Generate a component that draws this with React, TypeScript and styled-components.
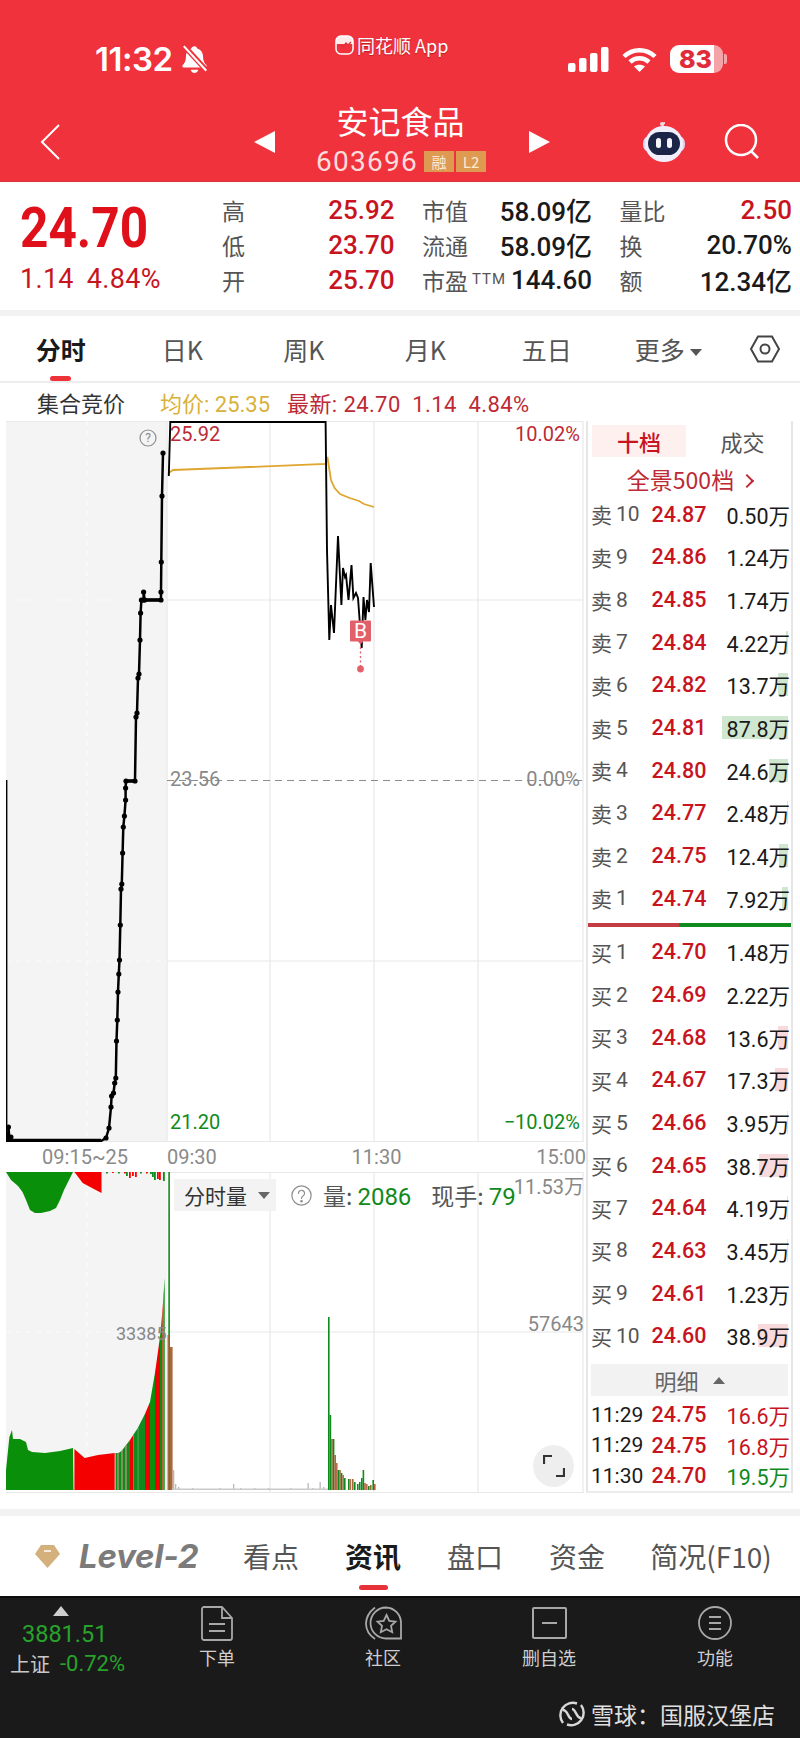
import React from "react";
import styled, { createGlobalStyle } from "styled-components";

const RED = "#c8141e";
const SOFT_RED = "#bd2a35";
const GREEN = "#0f8a1c";
const NUM = `Roboto, "Noto Sans CJK SC", sans-serif`;
const CJK = `"Noto Sans CJK SC", Roboto, sans-serif`;

const Global = createGlobalStyle`
  html, body { margin: 0; padding: 0; background: #fff; }
  * { box-sizing: border-box; }
`;

const Page = styled.div`
  width: 800px;
  height: 1738px;
  display: flex;
  flex-direction: column;
  overflow: hidden;
  font-family: ${CJK};
  color: #1a1a1a;
`;

/* header */
const Header = styled.header`
  height: 182px;
  background: #f0323c;
  color: #fff;
  border-bottom: 1px solid #d8343c;
`;
const StatusBar = styled.div`
  height: 103px;
  display: grid;
  grid-template-columns: 335px 1fr auto;
`;
const StatusLeft = styled.div`
  padding: 37px 0 0 95px;
  height: 81px;
  display: flex;
  align-items: center;
  gap: 7px;
`;
const Clock = styled.span`
  font: 600 33px Inter, sans-serif;
  letter-spacing: -0.5px;
`;
const AppTag = styled.div`
  display: flex;
  align-items: center;
  gap: 3px;
  height: 20px;
  margin-top: 35px;
  font: 400 18px ${CJK};
  color: #fff;
  text-shadow: 0 1px 1px rgba(120, 0, 0, 0.45);
`;
const StatusRight = styled.div`
  padding: 37px 77px 0 0;
  height: 81px;
  display: flex;
  align-items: center;
  gap: 13px;
`;
const Battery = styled.div`
  position: relative;
  width: 53px;
  height: 28px;
  border-radius: 9px;
  background: linear-gradient(90deg, #fff 0 44px, #f4a3a8 44px);
  color: #e02c38;
  font: 800 25px/28px Inter, sans-serif;
  padding-left: 9px;
  &::after {
    content: "";
    position: absolute;
    right: -4px;
    top: 9px;
    width: 3px;
    height: 10px;
    border-radius: 0 2px 2px 0;
    background: #f4a3a8;
  }
`;
const NavRow = styled.div`
  height: 78px;
  display: flex;
  align-items: center;
`;
const BackCell = styled.div`
  width: 254px;
  padding-left: 40px;
  display: flex;
`;
const Arrow = styled.div<{ $dir: "left" | "right" }>`
  width: 0;
  height: 0;
  border-top: 11px solid transparent;
  border-bottom: 11px solid transparent;
  ${(p) =>
    p.$dir === "left"
      ? "border-right: 21px solid #fff;"
      : "border-left: 21px solid #fff;"}
`;
const TitleBlock = styled.div`
  width: 254px;
  display: flex;
  flex-direction: column;
  align-items: center;
`;
const Title = styled.div`
  font: 400 32px/40px ${CJK};
  margin: -5px 3px 3px 0;
`;
const CodeLine = styled.div`
  display: flex;
  align-items: center;
  height: 36px;
  margin-right: 2px;
  font: 400 28px ${NUM};
  letter-spacing: 1.3px;
  color: #fbdcdc;
`;
const Badge = styled.span`
  width: 30px;
  height: 21px;
  margin-left: 2px;
  background: #df9a52;
  color: #fbe9d3;
  font: 400 15px/21px ${CJK};
  letter-spacing: 0;
  text-align: center;
  &:first-of-type {
    margin-left: 6px;
  }
`;
const NavTools = styled.div`
  margin-left: 92px;
  display: flex;
  align-items: center;
  gap: 38px;
`;

/* quote */
const Quote = styled.section`
  height: 128px;
  display: grid;
  grid-template-columns: 222px 1fr;
  background: #fff;
`;
const PriceBlock = styled.div`
  padding: 16px 0 0 20px;
`;
const LastPrice = styled.div`
  font: 700 56px/60px ${NUM};
  color: #e0101a;
  transform: scaleX(0.885);
  transform-origin: left;
`;
const Change = styled.div`
  display: flex;
  gap: 13px;
  margin-top: 6px;
  font: 400 27px/30px ${NUM};
  letter-spacing: 0.3px;
  color: ${RED};
`;
const StatGrid = styled.div`
  padding-top: 10px;
  display: grid;
  grid-template-columns: 172.5px 170px 172.5px;
  column-gap: 27.5px;
  grid-auto-rows: 35px;
`;
const Stat = styled.div`
  display: flex;
  justify-content: space-between;
  align-items: center;
  white-space: nowrap;
`;
const StatLabel = styled.span`
  font: 400 23px ${CJK};
  color: #555;
  sup {
    font: 400 15px ${NUM};
    vertical-align: 6px;
    margin-left: 4px;
    letter-spacing: 1px;
  }
`;
const StatValue = styled.span<{ $red?: boolean }>`
  font: 500 26px ${NUM};
  color: ${(p) => (p.$red ? RED : "#1a1a1a")};
`;
const GrayStrip = styled.div<{ $h?: number }>`
  height: ${(p) => p.$h || 6}px;
  background: #f2f2f2;
  flex: none;
`;

/* period tabs */
const PeriodTabs = styled.nav`
  height: 67px;
  display: grid;
  grid-template-columns: repeat(6, 121.5px) 1fr;
  align-items: center;
  border-bottom: 2px solid #ececec;
  flex: none;
`;
const PeriodTab = styled.div<{ $active?: boolean }>`
  position: relative;
  text-align: center;
  font: ${(p) => (p.$active ? 700 : 400)} 25px/34px ${CJK};
  color: ${(p) => (p.$active ? "#1a1a1a" : "#555")};
  ${(p) =>
    p.$active &&
    `&::after {
      content: "";
      position: absolute;
      left: 50px;
      top: 44px;
      width: 21px;
      height: 5px;
      border-radius: 3px;
      background: #ee3239;
    }`}
`;
const Caret = styled.span`
  display: inline-block;
  margin-left: 5px;
  vertical-align: 4px;
  border-left: 6px solid transparent;
  border-right: 6px solid transparent;
  border-top: 7px solid #555;
`;
const HexCell = styled.div`
  display: flex;
  justify-content: center;
`;
const InfoRow = styled.div`
  height: 38px;
  display: flex;
  align-items: center;
  padding-left: 37px;
  font: 400 22px ${CJK};
  flex: none;
`;
const InfoName = styled.span`
  width: 123px;
  color: #333;
`;
const InfoGold = styled.span`
  width: 127px;
  color: #d8b13a;
  font-family: ${NUM};
  white-space: nowrap;
`;
const InfoRed = styled.span`
  color: ${SOFT_RED};
  font-family: ${NUM};
  letter-spacing: 0.4px;
  white-space: pre;
`;

/* chart + order book */
const Board = styled.section`
  height: 1072px;
  padding-left: 6px;
  display: grid;
  grid-template-columns: 580px 207px;
  flex: none;
`;
const ChartColumn = styled.div`
  display: flex;
  flex-direction: column;
`;
const PriceChart = styled.div`
  position: relative;
  height: 721px;
`;
const ChartSvg = styled.svg`
  display: block;
`;
const ChartLabel = styled.span<{ $color?: string; $x?: number; $right?: number; $y: number }>`
  position: absolute;
  top: ${(p) => p.$y}px;
  ${(p) => (p.$x !== undefined ? `left: ${p.$x}px;` : `right: ${p.$right}px;`)}
  font: 400 20px/24px ${NUM};
  color: ${(p) => p.$color || "#888"};
  white-space: nowrap;
`;
const HelpMark = styled(ChartLabel)`
  font-size: 12px;
  line-height: 20px;
  width: 8px;
  text-align: center;
`;
const BuyMark = styled(ChartLabel)`
  font-size: 21px;
  width: 20px;
  text-align: center;
`;
const PreVolLabel = styled(ChartLabel)`
  font-size: 18px;
`;
const AxisRow = styled.div`
  position: relative;
  height: 30px;
  font: 400 20px/30px ${NUM};
  color: #8a8a8a;
  display: grid;
  grid-template-columns: 161px 1fr 1fr 1fr;
`;
const AxisPre = styled.span`
  text-align: right;
  padding-right: 39px;
  white-space: nowrap;
`;
const AxisCell = styled.span<{ $align: string }>`
  text-align: ${(p) => p.$align};
`;
const VolumeChart = styled.div`
  position: relative;
  height: 321px;
`;
const VolumeBar = styled.div`
  position: absolute;
  left: 168px;
  top: 7px;
  display: flex;
  align-items: center;
  height: 32px;
  font: 400 23px ${CJK};
  color: #555;
`;
const VolumeSelect = styled.div`
  width: 102px;
  height: 32px;
  background: #f3f3f3;
  color: #333;
  display: flex;
  align-items: center;
  padding-left: 10px;
  gap: 11px;
  font-size: 21px;
`;
const VolCaret = styled(Caret)`
  margin: 0;
  vertical-align: 0;
  border-top-color: #666;
`;
const VolumeHelp = styled.span`
  display: flex;
  margin: 0 11px 0 15px;
`;
const VolumeNum = styled.span`
  color: ${GREEN};
  font-family: ${NUM};
  font-size: 24px;
  margin-left: 5px;
`;
const VolumeGroup = styled.span`
  white-space: nowrap;
  & + & {
    margin-left: 20px;
  }
`;
const ExpandButton = styled.div`
  position: absolute;
  left: 527px;
  top: 273px;
  width: 41px;
  height: 42px;
  border-radius: 50%;
  background: #eeeeee;
  display: flex;
  align-items: center;
  justify-content: center;
`;

const OrderBook = styled.aside`
  border-left: 2px solid #e6e6e6;
  border-right: 2px solid #e6e6e6;
  border-bottom: 2px solid #ececec;
  display: flex;
  flex-direction: column;
  padding-top: 4px;
  width: 207px;
  overflow: hidden;
`;
const BookTabs = styled.div`
  display: grid;
  grid-template-columns: 94px 1fr;
  margin: 0 4px;
  height: 32px;
`;
const BookTab = styled.div<{ $active?: boolean }>`
  text-align: center;
  font: ${(p) => (p.$active ? 500 : 400)} 22px/32px ${CJK};
  color: ${(p) => (p.$active ? RED : "#555")};
  background: ${(p) => (p.$active ? "#fdf0ef" : "transparent")};
  padding-left: ${(p) => (p.$active ? 0 : 12)}px;
`;
const FullDepth = styled.div`
  height: 36px;
  text-align: center;
  font: 400 23px/44px ${CJK};
  color: ${SOFT_RED};
`;
const Chevron = styled.span`
  display: inline-block;
  width: 10px;
  height: 10px;
  margin-left: 8px;
  vertical-align: 3px;
  border-top: 2px solid ${SOFT_RED};
  border-right: 2px solid ${SOFT_RED};
  transform: rotate(45deg);
`;
const BookRow = styled.div<{ $h: number }>`
  position: relative;
  height: ${(p) => p.$h}px;
  flex: none;
  display: grid;
  grid-template-columns: 60.5px 58px 1fr;
  align-items: center;
  padding: 0 1px 0 3px;
  white-space: nowrap;
`;
const Level = styled.span`
  font: 400 21px ${NUM};
  color: #555;
  display: flex;
  align-items: center;
  gap: 4px;
`;
const LevelSide = styled.span`
  font-family: ${CJK};
`;
const BookPrice = styled.span`
  font: 500 21.5px ${NUM};
  color: ${RED};
`;
const BookVol = styled.span<{ $color?: string }>`
  position: relative;
  text-align: right;
  font: 400 21.5px ${NUM};
  color: ${(p) => p.$color || "#1a1a1a"};
`;
const VolShade = styled.span<{ $buy?: boolean }>`
  position: absolute;
  right: 2px;
  top: 50%;
  height: 23px;
  margin-top: -11.5px;
  background: ${(p) => (p.$buy ? "#f8d9dc" : "#cfe6cf")};
`;
const BookVolText = styled.span`
  position: relative;
`;
const SplitBar = styled.div`
  height: 4px;
  flex: none;
  margin: 3px 0 4px;
  background: linear-gradient(90deg, #c23c44 0 91px, #108a1e 91px);
`;
const DetailBar = styled.div`
  height: 32px;
  flex: none;
  margin: 7px 3px 3px;
  width: 197px;
  background: #f2f2f2;
  display: flex;
  align-items: center;
  justify-content: center;
  gap: 14px;
  font: 400 22px ${CJK};
  color: #666;
`;
const UpCaret = styled.span`
  border-left: 6px solid transparent;
  border-right: 6px solid transparent;
  border-bottom: 7px solid #666;
`;
const TickTime = styled.span`
  font: 400 21px ${NUM};
  color: #1a1a1a;
`;

/* section tabs */
const Spacer = styled.div`
  height: 16px;
  flex: none;
`;
const SectionTabs = styled.nav`
  height: 80px;
  padding-left: 35px;
  display: flex;
  align-items: center;
  flex: none;
`;
const LevelBrand = styled.div`
  width: 185px;
  display: flex;
  align-items: center;
  gap: 19px;
  font: italic 700 33px Inter, sans-serif;
  letter-spacing: -0.2px;
  color: #7b7b7b;
  white-space: nowrap;
`;
const SectionTab = styled.div<{ $active?: boolean; $w?: number }>`
  position: relative;
  width: ${(p) => p.$w || 102}px;
  text-align: center;
  white-space: nowrap;
  font: ${(p) => (p.$active ? 700 : 400)} 28px/36px ${CJK};
  color: ${(p) => (p.$active ? "#1a1a1a" : "#555")};
  ${(p) =>
    p.$active &&
    `&::after {
      content: "";
      position: absolute;
      left: 37px;
      top: 47px;
      width: 29px;
      height: 5px;
      border-radius: 3px;
      background: #e8323a;
    }`}
`;

/* bottom */
const Footer = styled.footer`
  flex: 1;
  background: #1a1a1a;
  border-top: 2px solid #0c0c0c;
  color: #cfcfcf;
`;
const FooterNav = styled.div`
  height: 84px;
  display: grid;
  grid-template-columns: 134px repeat(4, 166px);
  padding-top: 6px;
`;
const IndexCell = styled.div`
  display: flex;
  flex-direction: column;
  align-items: flex-start;
  padding-left: 10px;
`;
const IndexCaret = styled.span`
  margin: 2px 0 0 43px;
  border-left: 8px solid transparent;
  border-right: 8px solid transparent;
  border-bottom: 10px solid #cfcfcf;
`;
const IndexValue = styled.div`
  margin: 3px 0 0 12px;
  font: 400 23.5px/30px ${NUM};
  color: #27a32b;
`;
const IndexLine = styled.div`
  display: flex;
  align-items: center;
  gap: 10px;
  margin-top: 1px;
  height: 26px;
  font: 400 20px ${CJK};
  color: #c8c8c8;
`;
const IndexPct = styled.span`
  font: 400 22px ${NUM};
  color: #27a32b;
`;
const FooterItem = styled.div`
  display: flex;
  flex-direction: column;
  align-items: center;
`;
const FooterIcon = styled.div`
  height: 38px;
  display: flex;
  align-items: center;
  justify-content: center;
`;
const FooterLabel = styled.span`
  font: 400 18px/26px ${CJK};
  margin-top: 2px;
  color: #cfcfcf;
`;
const Watermark = styled.div`
  margin-top: 16px;
  padding-right: 25px;
  height: 32px;
  display: flex;
  align-items: center;
  justify-content: flex-end;
  gap: 5px;
  font: 400 23px ${CJK};
  color: #e0e0e0;
`;

/* chart data, in page coordinates */
const pts = (a: number[][]) => a.map((p) => p.join(",")).join(" ");

const rise = [
  [106, 1138], [109, 1128], [111, 1107], [111.6, 1096], [113.5, 1093], [114.7, 1083], [115.8, 1078],
  [116.5, 1041], [117.3, 1020], [118, 992], [118.8, 974], [119.5, 960], [120.3, 925], [121, 889],
  [121.8, 884], [122.6, 853], [123.3, 827], [124.4, 816], [125.6, 800], [125.6, 788], [126, 781],
  [135, 781], [136, 717], [137, 713], [138, 678], [139, 674], [140, 640], [140.6, 613], [141.4, 600],
  [143.6, 600], [143.6, 592], [144.6, 600], [161, 600], [161, 592], [161.3, 562], [162, 496], [163, 453],
];
const auctionLine = [[8, 1141], [8.5, 1127], [9.5, 1141], [11, 1137], [12, 1141], [101, 1141], ...rise];
const dayLine = [
  [168.8, 476], [170.3, 422], [325.6, 422], [327, 550], [329.3, 640], [331, 605], [334, 633], [338, 536],
  [341.4, 605], [343, 568], [345, 577], [346, 575], [348.5, 600], [351.5, 565], [353.4, 598], [356, 593],
  [358, 598], [360, 625], [361.7, 648], [363.5, 597], [365.4, 620], [367, 600], [369, 612], [370.7, 563], [374, 607],
];
const avgLine = [
  [168.8, 473], [173, 470], [325.6, 464], [327.4, 457], [331, 480], [334.6, 488], [340, 494], [349.6, 498],
  [359, 501], [364, 504], [374, 507],
];

const preBars = [
  [106, 1.5, GREEN], [112, 1, "#f00"], [118, 1.5, GREEN], [124, 1.5, "#f00"], [126, 4, GREEN], [129, 6, "#f00"],
  [132, 4, "#f00"], [135, 5, "#f00"], [140, 1.5, GREEN], [146, 1.5, "#f00"], [150, 2, GREEN], [152, 5, GREEN],
  [154, 8, GREEN], [157, 7, "#f00"], [159, 8, "#f00"], [163, 9, GREEN],
] as [number, number, string][];
const riseTop = (x: number) => {
  const e = [[115, 1453], [120, 1453], [130, 1440], [141, 1423], [150, 1402], [156, 1367], [160, 1337], [162.5, 1310], [165, 1273]];
  for (let i = 1; i < e.length; i++) {
    if (x <= e[i][0]) {
      const t = (x - e[i - 1][0]) / (e[i][0] - e[i - 1][0]);
      return e[i - 1][1] + t * (e[i][1] - e[i - 1][1]);
    }
  }
  return 1273;
};
const riseStripes = [
  [115.5, 2, GREEN], [117.5, 1, "#d84030"], [118.5, 3, GREEN], [121.5, 1, "#d84030"], [122.5, 3, GREEN],
  [125.5, 1, "#d84030"], [126.5, 3.5, GREEN], [130, 3.5, "#f00000"], [133.5, 3.5, GREEN], [137, 1.2, "#d84030"],
  [138.2, 6.8, GREEN], [145, 5, "#f00000"], [150, 5, "#0a8f0a"], [155, 5, "#f00000"], [160, 2.5, "#0a8f0a"],
  [162.5, 1, "#f00000"], [163.5, 1.2, "#0a8f0a"],
] as [number, number, string][];
const dayBars = [
  [328, 1.6, 1317, GREEN], [329.6, 1.6, 1415, GREEN], [331.2, 1.6, 1439, "#a9683c"], [332.8, 1.6, 1439, GREEN],
  [334.4, 1.6, 1455, "#a9683c"], [336, 1.6, 1463, "#c06a50"], [337.6, 1.6, 1470, GREEN], [339.2, 1.6, 1470, "#a9683c"],
  [340.8, 1.6, 1473, GREEN], [342.4, 1.6, 1475, "#c06a50"], [344, 1.6, 1478, GREEN], [348, 1.6, 1479, GREEN],
  [349.6, 1.6, 1479, "#c06a50"], [352, 1.6, 1479, "#a9683c"], [354, 1.6, 1482, GREEN], [357, 1.6, 1484, GREEN],
  [359, 1.6, 1482, GREEN], [361, 1.6, 1478, GREEN], [362.6, 1.6, 1470, GREEN], [364.2, 1.6, 1483, "#a9683c"],
  [366, 1.6, 1484, "#c06a50"], [368, 1.6, 1486, GREEN], [370, 1.6, 1485, "#a9683c"], [372.4, 1.6, 1480, GREEN],
  [374, 1.6, 1484, "#a9683c"],
] as [number, number, number, string][];
const tinyBars = [
  [173, 1470], [175, 1484], [178, 1487], [192, 1488], [219, 1488], [233, 1484], [240, 1488], [254, 1488],
  [268, 1488], [290, 1488], [307.5, 1483], [312, 1488], [319.5, 1482], [323, 1487],
];

const PriceDrawing = () => (
  <ChartSvg width={580} height={721} viewBox="6 421 580 721">
    <rect x={6} y={421} width={161} height={721} fill="#f4f4f4" />
    <g stroke="#e8e8e8" strokeWidth={1.2} fill="none">
      <path d="M6 421.5H583M583 421V1142M6 1141.5H583M167 600H583M167 961H583M167 421V1142M270 421V1142M374 421V1142M478 421V1142" />
    </g>
    <path d="M6 600H167M6 961H167M87 421V1142" stroke="#fafafa" strokeWidth={1.2} strokeDasharray="5 5" />
    <path d="M167 780.5H583" stroke="#8c8c8c" strokeWidth={1.2} strokeDasharray="7 5" />
    <path d="M6.7 780V1142" stroke="#000" strokeWidth={1.4} />
    <polyline points={pts(auctionLine)} fill="none" stroke="#000" strokeWidth={2.5} strokeLinejoin="round" />
    <path d="M7 1141H101" stroke="#000" strokeWidth={4.5} />
    <path d="M126 781H135M141 600H161" stroke="#000" strokeWidth={3.5} />
    {rise.map((p, i) => (
      <circle key={i} cx={p[0]} cy={p[1]} r={2.6} fill="#000" />
    ))}
    <circle cx={8.5} cy={1127} r={2.5} fill="#000" />
    <circle cx={11} cy={1137} r={2.5} fill="#000" />
    <polyline points={pts(avgLine)} fill="none" stroke="#e0a52e" strokeWidth={1.8} />
    <polyline points={pts(dayLine)} fill="none" stroke="#000" strokeWidth={1.9} strokeLinejoin="miter" />
    <path d="M360.5 647V666" stroke="#e2606a" strokeWidth={1.4} strokeDasharray="2 2.5" />
    <circle cx={360.5} cy={669} r={3.4} fill="#e2606a" />
    <path d="M351 620.5h19a1 1 0 0 1 1 1v19a1 1 0 0 1-1 1h-7l-2.5 3-2.5-3h-7a1 1 0 0 1-1-1v-19a1 1 0 0 1 1-1z" fill="#e2606a" />
    <circle cx={148} cy={438} r={8} fill="none" stroke="#8e8e8e" strokeWidth={1.2} />
  </ChartSvg>
);

const VolumeDrawing = () => (
  <ChartSvg width={580} height={321} viewBox="6 1172 580 321">
    <rect x={6} y={1172} width={161} height={318} fill="#f4f4f4" />
    <path
      d="M6 1172.5H583M583 1172V1493M6 1492.5H583M167 1332H583M270 1172V1492M374 1172V1492M478 1172V1492"
      stroke="#e8e8e8"
      strokeWidth={1.2}
      fill="none"
    />
    <path d="M6 1332H167M87 1172V1490" stroke="#fafafa" strokeWidth={1.2} strokeDasharray="5 5" />
    <polygon
      points="6,1172 11,1180 18,1186 22.5,1192 26,1200 30,1210 35,1213 41,1213 50,1211 56,1208 60,1200 64,1190 69,1180 73,1172"
      fill="#0a8f0a"
    />
    <polygon points="74.4,1172 82.7,1183 92,1188 101.5,1193 101.5,1172" fill="#f40000" />
    {preBars.map(([x, h, c], i) => (
      <rect key={i} x={x} y={1172} width={1.8} height={h} fill={c} />
    ))}
    <polygon
      points="6,1490 6,1470 9.4,1437 12,1430 13,1439 20,1439 26,1442 28,1450 32,1452 45,1453 60,1451 73,1448 73.5,1490"
      fill="#0a8f0a"
    />
    <polygon points="74.4,1449 84.6,1458 98,1455 114.7,1453 114.7,1490 74.4,1490" fill="#f40000" />
    {riseStripes.map(([x, w, c], i) => (
      <polygon key={i} points={pts([[x, 1490], [x, riseTop(x)], [x + w, riseTop(x + w)], [x + w, 1490]])} fill={c} />
    ))}
    <rect x={168.3} y={1172} width={1.6} height={318} fill={GREEN} />
    <rect x={167.5} y={1335} width={1.4} height={155} fill="#a9683c" />
    <rect x={170} y={1347} width={2.6} height={143} fill="#a9683c" />
    {tinyBars.map(([x, y], i) => (
      <rect key={i} x={x} y={y} width={1.3} height={1490 - y} fill="#b9b9b9" />
    ))}
    <rect x={172} y={1488.5} width={156} height={1.5} fill="#c9c9c9" />
    {dayBars.map(([x, w, y, c], i) => (
      <rect key={i} x={x} y={y} width={w} height={1490 - y} fill={c} />
    ))}
  </ChartSvg>
);

const asks = [
  ["10", "24.87", "0.50万", 0], ["9", "24.86", "1.24万", 0], ["8", "24.85", "1.74万", 0], ["7", "24.84", "4.22万", 2],
  ["6", "24.82", "13.7万", 10], ["5", "24.81", "87.8万", 66], ["4", "24.80", "24.6万", 19], ["3", "24.77", "2.48万", 1],
  ["2", "24.75", "12.4万", 9], ["1", "24.74", "7.92万", 6],
] as [string, string, string, number][];
const bids = [
  ["1", "24.70", "1.48万", 0], ["2", "24.69", "2.22万", 0], ["3", "24.68", "13.6万", 10], ["4", "24.67", "17.3万", 13],
  ["5", "24.66", "3.95万", 1], ["6", "24.65", "38.7万", 29], ["7", "24.64", "4.19万", 1], ["8", "24.63", "3.45万", 1],
  ["9", "24.61", "1.23万", 0], ["10", "24.60", "38.9万", 30],
] as [string, string, string, number][];
const ticks = [
  ["11:29", "24.75", "16.6万", RED],
  ["11:29", "24.75", "16.8万", RED],
  ["11:30", "24.70", "19.5万", GREEN],
];

const stats = [
  ["高", "25.92", true], ["市值", "58.09亿", false], ["量比", "2.50", true],
  ["低", "23.70", true], ["流通", "58.09亿", false], ["换", "20.70%", false],
  ["开", "25.70", true], ["市盈", "144.60", false], ["额", "12.34亿", false],
] as [string, string, boolean][];

const BookSide = ({ side, rows }: { side: string; rows: [string, string, string, number][] }) => (
  <>
    {rows.map(([n, price, vol, shade]) => (
      <BookRow key={n} $h={42.67}>
        <Level>
          <LevelSide>{side}</LevelSide>
          {n}
        </Level>
        <BookPrice>{price}</BookPrice>
        <BookVol>
          {shade > 0 && <VolShade $buy={side === "买"} style={{ width: shade }} />}
          <BookVolText>{vol}</BookVolText>
        </BookVol>
      </BookRow>
    ))}
  </>
);

const HelpIcon = ({ size, color }: { size: number; color: string }) => (
  <svg width={size} height={size} viewBox="0 0 24 24" fill="none" stroke={color} strokeWidth={1.4}>
    <circle cx="12" cy="12" r="11" />
    <path d="M8.5 9.5a3.5 3.5 0 1 1 5.5 2.9c-1.3.9-2 1.5-2 3" strokeLinecap="round" />
    <circle cx="12" cy="18.5" r="0.8" fill={color} />
  </svg>
);

export default function App() {
  return (
    <Page>
      <Global />
      <Header>
        <StatusBar>
          <StatusLeft>
            <Clock>11:32</Clock>
            <svg width="29" height="30" viewBox="0 0 27 28">
              <path d="M13.5 2c1.5 0 2.3 1 2.5 2.2 3.5 1 5.5 4 5.500 8 0 4 1.500 6 3 7.500.8.900.3 2.300-1 2.300H3.500c-1.300 0-1.800-1.400-1-2.300 1.500-1.500 3-3.500 3-7.500 0-4 2-7 5-8C10.800 3 12 2 13.500 2z" fill="#fff" />
              <path d="M10 24h7c-.5 2-2 3-3.5 3S10.500 26 10 24z" fill="#fff" />
              <path d="M3 1l22 24" stroke="#f0323c" strokeWidth="5" />
              <path d="M3.5 2l21 23" stroke="#fff" strokeWidth="2" />
            </svg>
          </StatusLeft>
          <AppTag>
            <svg width="19" height="20" viewBox="0 0 19 20">
              <rect x="1" y="1" width="17" height="18" rx="5" fill="none" stroke="#fff" strokeWidth="1.5" />
              <path d="M1 9V6a5 5 0 0 1 5-5h7a5 5 0 0 1 5 5v3z" fill="#fff" opacity="0.9" />
              <path d="M3 11l3-1 2 2 3-4 2 2 3-3" fill="none" stroke="#e0303a" strokeWidth="1.3" />
            </svg>
            同花顺 App
          </AppTag>
          <StatusRight>
            <svg width="41" height="25" viewBox="0 0 41 25" fill="#fff">
              <rect x="0" y="16" width="7.5" height="9" rx="2" />
              <rect x="11" y="11" width="7.5" height="14" rx="2" />
              <rect x="22" y="6" width="7.5" height="19" rx="2" />
              <rect x="33" y="0" width="7.5" height="25" rx="2" />
            </svg>
            <svg width="35" height="25" viewBox="0 0 35 25" fill="none" stroke="#fff" strokeWidth="4.5">
              <path d="M2 9.5C10.5 1 24.5 1 33 9.5" />
              <path d="M8 15c5.5-5 13.5-5 19 0" />
              <path d="M17.5 25l-5.5-5.500c3-2.500 8-2.500 11 0z" fill="#fff" stroke="none" />
            </svg>
            <Battery>83</Battery>
          </StatusRight>
        </StatusBar>
        <NavRow>
          <BackCell>
            <svg width="20" height="36" viewBox="0 0 20 36" fill="none" stroke="#fff" strokeWidth="2">
              <path d="M19 1L2 18l17 17" />
            </svg>
          </BackCell>
          <Arrow $dir="left" />
          <TitleBlock>
            <Title>安记食品</Title>
            <CodeLine>
              603696
              <Badge>融</Badge>
              <Badge>L2</Badge>
            </CodeLine>
          </TitleBlock>
          <Arrow $dir="right" />
          <NavTools>
            <svg width="44" height="42" viewBox="0 0 44 42">
              <path d="M21 7c-1-3 0-5 2-5" fill="none" stroke="#f6d9dc" strokeWidth="2" />
              <circle cx="20" cy="3" r="2" fill="#f6d9dc" />
              <ellipse cx="5" cy="23" rx="4" ry="7" fill="#dcd6f5" />
              <ellipse cx="39" cy="23" rx="4" ry="7" fill="#dcd6f5" />
              <ellipse cx="22" cy="23" rx="19" ry="18" fill="#f1effb" />
              <rect x="6" y="11" width="32" height="23" rx="11.5" fill="#1c2547" />
              <rect x="14" y="17" width="5" height="10" rx="2.5" fill="#f4f4f8" />
              <rect x="25" y="17" width="5" height="10" rx="2.5" fill="#f4f4f8" />
            </svg>
            <svg width="36" height="36" viewBox="0 0 36 36" fill="none" stroke="#fff" strokeWidth="2.5">
              <circle cx="17" cy="16" r="15" />
              <path d="M27 27l7 7" />
            </svg>
          </NavTools>
        </NavRow>
      </Header>

      <Quote>
        <PriceBlock>
          <LastPrice>24.70</LastPrice>
          <Change>
            <span>1.14</span>
            <span>4.84%</span>
          </Change>
        </PriceBlock>
        <StatGrid>
          {stats.map(([label, value, red]) => (
            <Stat key={label}>
              <StatLabel>
                {label}
                {label === "市盈" && <sup>TTM</sup>}
              </StatLabel>
              <StatValue $red={red}>{value}</StatValue>
            </Stat>
          ))}
        </StatGrid>
      </Quote>
      <GrayStrip />

      <PeriodTabs>
        <PeriodTab $active>分时</PeriodTab>
        <PeriodTab>日K</PeriodTab>
        <PeriodTab>周K</PeriodTab>
        <PeriodTab>月K</PeriodTab>
        <PeriodTab>五日</PeriodTab>
        <PeriodTab>
          更多
          <Caret />
        </PeriodTab>
        <HexCell>
          <svg width="30" height="28" viewBox="0 0 30 28" fill="none" stroke="#444" strokeWidth="2">
            <path d="M8 1.5h14L29 14l-7 12.5H8L1 14z" />
            <circle cx="15" cy="14" r="4.5" />
          </svg>
        </HexCell>
      </PeriodTabs>
      <InfoRow>
        <InfoName>集合竞价</InfoName>
        <InfoGold>均价: 25.35</InfoGold>
        <InfoRed>最新: 24.70  1.14  4.84%</InfoRed>
      </InfoRow>

      <Board>
        <ChartColumn>
          <PriceChart>
            <PriceDrawing />
            <ChartLabel $x={164} $y={1} $color={SOFT_RED}>25.92</ChartLabel>
            <ChartLabel $right={6} $y={1} $color={SOFT_RED}>10.02%</ChartLabel>
            <ChartLabel $x={164} $y={346}>23.56</ChartLabel>
            <ChartLabel $right={6} $y={346}>0.00%</ChartLabel>
            <ChartLabel $x={164} $y={689} $color={GREEN}>21.20</ChartLabel>
            <ChartLabel $right={6} $y={689} $color={GREEN}>−10.02%</ChartLabel>
            <HelpMark $x={138} $y={7}>?</HelpMark>
            <BuyMark $x={344.5} $y={198} $color="#fff">B</BuyMark>
          </PriceChart>
          <AxisRow>
            <AxisPre>09:15~25</AxisPre>
            <AxisCell $align="left">09:30</AxisCell>
            <AxisCell $align="center">11:30</AxisCell>
            <AxisCell $align="right">15:00</AxisCell>
          </AxisRow>
          <VolumeChart>
            <VolumeDrawing />
            <VolumeBar>
              <VolumeSelect>
                分时量
                <VolCaret />
              </VolumeSelect>
              <VolumeHelp>
                <HelpIcon size={21} color="#8e8e8e" />
              </VolumeHelp>
              <VolumeGroup>
                量:<VolumeNum>2086</VolumeNum>
              </VolumeGroup>
              <VolumeGroup>
                现手:<VolumeNum>79</VolumeNum>
              </VolumeGroup>
            </VolumeBar>
            <ChartLabel $right={2} $y={3}>11.53万</ChartLabel>
            <ChartLabel $right={2} $y={140}>57643</ChartLabel>
            <PreVolLabel $x={110} $y={150}>33385</PreVolLabel>
            <ExpandButton>
              <svg width="22" height="22" viewBox="0 0 22 22" fill="none" stroke="#333" strokeWidth="2.2">
                <path d="M1 9V1h8M21 13v8h-8" />
              </svg>
            </ExpandButton>
          </VolumeChart>
        </ChartColumn>
        <OrderBook>
          <BookTabs>
            <BookTab $active>十档</BookTab>
            <BookTab>成交</BookTab>
          </BookTabs>
          <FullDepth>
            全景500档
            <Chevron />
          </FullDepth>
          <BookSide side="卖" rows={asks} />
          <SplitBar />
          <BookSide side="买" rows={bids} />
          <DetailBar>
            明细
            <UpCaret />
          </DetailBar>
          {ticks.map(([time, price, vol, color], i) => (
            <BookRow key={i} $h={30.5}>
              <TickTime>{time}</TickTime>
              <BookPrice>{price}</BookPrice>
              <BookVol $color={color}>{vol}</BookVol>
            </BookRow>
          ))}
        </OrderBook>
      </Board>

      <Spacer />
      <GrayStrip $h={7} />
      <SectionTabs>
        <LevelBrand>
          <svg width="25" height="23" viewBox="0 0 25 23">
            <path d="M6 0h13l6 9-12.5 14L0 9z" fill="#d4b07c" />
            <path d="M9 6h7" stroke="#fff" strokeWidth="1.5" />
          </svg>
          Level-2
        </LevelBrand>
        <SectionTab>看点</SectionTab>
        <SectionTab $active>资讯</SectionTab>
        <SectionTab>盘口</SectionTab>
        <SectionTab>资金</SectionTab>
        <SectionTab $w={166}>简况(F10)</SectionTab>
      </SectionTabs>

      <Footer>
        <FooterNav>
          <IndexCell>
            <IndexCaret />
            <IndexValue>3881.51</IndexValue>
            <IndexLine>
              上证
              <IndexPct>-0.72%</IndexPct>
            </IndexLine>
          </IndexCell>
          <FooterItem>
            <FooterIcon>
              <svg width="32" height="35" viewBox="0 0 32 35" fill="none" stroke="#a8a8a8" strokeWidth="1.8">
                <path d="M3 1h18l10 11v20a2 2 0 0 1-2 2H3a2 2 0 0 1-2-2V3a2 2 0 0 1 2-2z" />
                <path d="M21 1v11h10M8 18h16M8 25h16" />
              </svg>
            </FooterIcon>
            <FooterLabel>下单</FooterLabel>
          </FooterItem>
          <FooterItem>
            <FooterIcon>
              <svg width="37" height="35" viewBox="0 0 37 35" fill="none" stroke="#a8a8a8" strokeWidth="1.8">
                <path d="M21 1.5a15.5 15.5 0 0 1 15 15.5v15.5H21A15.5 15.5 0 0 1 21 1.5z" />
                <path d="M10 1.5C3 7 1 13 1 17.5c0 6 3 11.5 9 15.5" />
                <path d="M21.5 9l2.8 5.8 6.2.8-4.5 4.3 1.2 6.3-5.7-3-5.7 3 1.2-6.3-4.5-4.3 6.2-.8z" />
              </svg>
            </FooterIcon>
            <FooterLabel>社区</FooterLabel>
          </FooterItem>
          <FooterItem>
            <FooterIcon>
              <svg width="35" height="32" viewBox="0 0 35 32" fill="none" stroke="#a8a8a8" strokeWidth="2">
                <rect x="1" y="1" width="33" height="30" rx="1" />
                <path d="M10 16h15" />
              </svg>
            </FooterIcon>
            <FooterLabel>删自选</FooterLabel>
          </FooterItem>
          <FooterItem>
            <FooterIcon>
              <svg width="34" height="34" viewBox="0 0 34 34" fill="none" stroke="#a8a8a8" strokeWidth="1.8">
                <circle cx="17" cy="17" r="16" />
                <path d="M11 11h12M11 17h12M11 23h12" />
              </svg>
            </FooterIcon>
            <FooterLabel>功能</FooterLabel>
          </FooterItem>
        </FooterNav>
        <Watermark>
          <svg width="28" height="28" viewBox="0 0 28 28" fill="none" stroke="#d8d8d8" strokeWidth="2.4">
            <path d="M19 3.5A12.5 12.5 0 0 0 5 23" />
            <path d="M9 24.5A12.5 12.5 0 0 0 23 5" />
            <path d="M5 10c5 0 5 9 9 9M23 18c-5 0-5-9-9-9" />
          </svg>
          雪球：国服汉堡店
        </Watermark>
      </Footer>
    </Page>
  );
}
